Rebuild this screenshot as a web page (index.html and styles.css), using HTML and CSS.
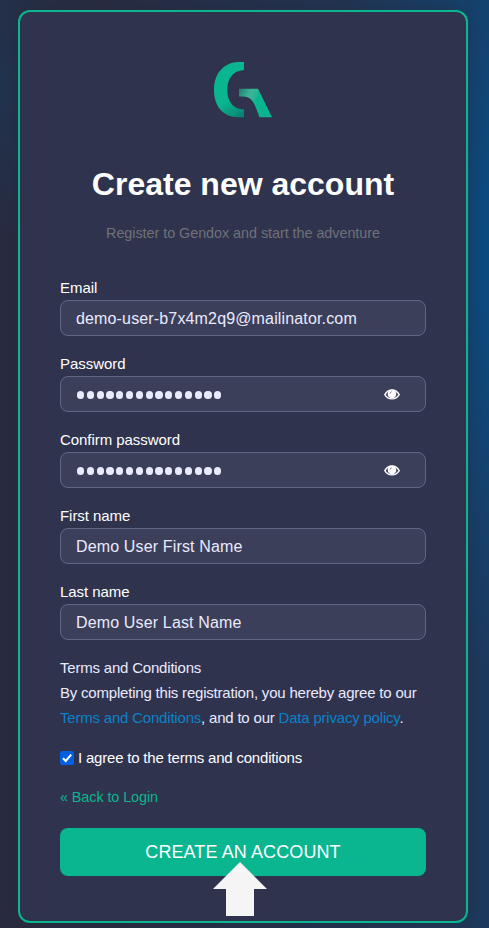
FILE: index.html
```html
<!DOCTYPE html>
<html lang="en">
<head>
<meta charset="utf-8">
<title>Create new account</title>
<link rel="stylesheet" href="styles.css">
</head>
<body>
<main class="card">
  <svg class="logo" width="58" height="56" viewBox="0 0 58 56" aria-hidden="true">
    <defs>
      <linearGradient id="bowl" gradientUnits="userSpaceOnUse" x1="15" y1="34" x2="31" y2="56">
        <stop offset="0.1" stop-color="#09b68f"/><stop offset="1" stop-color="#087a6c"/>
      </linearGradient>
      <linearGradient id="leg" gradientUnits="userSpaceOnUse" x1="24" y1="28" x2="45" y2="39">
        <stop offset="0" stop-color="#21776f"/><stop offset="0.5" stop-color="#3cb499"/><stop offset="0.72" stop-color="#2eb596"/><stop offset="0.9" stop-color="#09b68f"/>
      </linearGradient>
    </defs>
    <path fill="url(#bowl)" d="M30 0H24C9 1 0 12 0 28S9 55 24 55.3H30V47.5C19 47 13.300 40 13.300 28S19 9 30 8Z"/>
    <path fill="url(#leg)" d="M25 26.700H44L58 55.300H45.500C41 43 39 34.500 29 34.500H25Z"/>
  </svg>
  <h1 class="title">Create new account</h1>
  <p class="subtitle">Register to Gendox and start the adventure</p>
  <form class="form">
    <div class="field">
      <label class="label" for="email">Email</label>
      <div class="control"><input class="input" id="email" type="text" value="demo-user-b7x4m2q9@mailinator.com"></div>
    </div>
    <div class="field">
      <label class="label" for="password">Password</label>
      <div class="control">
        <span class="input secret" id="password"><i></i><i></i><i></i><i></i><i></i><i></i><i></i><i></i><i></i><i></i><i></i><i></i><i></i><i></i><i></i></span>
        <svg class="eye" width="16" height="12" viewBox="0 0 16 12"><path fill="none" stroke="#fff" stroke-width="1.400" d="M.8 5.600C4.300 -.6 11.700 -.6 15.200 5.600C11.700 11.300 4.300 11.300 .8 5.600Z"/><circle cx="8" cy="5" r="4.300" fill="#fff"/><path d="M6 4.500Q6.200 3 7.800 2.700" fill="none" stroke="#3c3f5a" stroke-width=".6"/></svg>
      </div>
    </div>
    <div class="field">
      <label class="label" for="confirm">Confirm password</label>
      <div class="control">
        <span class="input secret" id="confirm"><i></i><i></i><i></i><i></i><i></i><i></i><i></i><i></i><i></i><i></i><i></i><i></i><i></i><i></i><i></i></span>
        <svg class="eye" width="16" height="12" viewBox="0 0 16 12"><path fill="none" stroke="#fff" stroke-width="1.400" d="M.8 5.600C4.300 -.6 11.700 -.6 15.200 5.600C11.700 11.300 4.300 11.300 .8 5.600Z"/><circle cx="8" cy="5" r="4.300" fill="#fff"/><path d="M6 4.500Q6.200 3 7.800 2.700" fill="none" stroke="#3c3f5a" stroke-width=".6"/></svg>
      </div>
    </div>
    <div class="field">
      <label class="label" for="first">First name</label>
      <div class="control"><input class="input" id="first" type="text" value="Demo User First Name"></div>
    </div>
    <div class="field">
      <label class="label" for="last">Last name</label>
      <div class="control"><input class="input" id="last" type="text" value="Demo User Last Name"></div>
    </div>
    <div class="terms">Terms and Conditions<br>By completing this registration, you hereby agree to our<br><a class="link">Terms and Conditions</a>, and to our <a class="link">Data privacy policy</a>.</div>
    <label class="agree">
      <svg class="check" width="14" height="14" viewBox="0 0 14 14"><rect width="14" height="14" rx="2" fill="#0060df"/><path d="M3 7.300L5.700 10L11.200 3.600" fill="none" stroke="#fff" stroke-width="2"/></svg>
      <span>I agree to the terms and conditions</span>
    </label>
    <a class="back">« Back to Login</a>
    <div class="action">
      <button class="submit" type="button">CREATE AN ACCOUNT</button>
      <svg class="pointer" width="54" height="54" viewBox="0 0 54 54"><path fill="#f5f5f5" d="M27 0L54 27H41V54H13V27H0Z"/></svg>
    </div>
  </form>
</main>
</body>
</html>
```

FILE: styles.css
```css
* { box-sizing: border-box; }
body {
  margin: 0;
  height: 928px;
  overflow: hidden;
  padding: 10px 21px 0 18px;
  font-family: "Liberation Sans", Arial, sans-serif;
  color: #fff;
  background:
    radial-gradient(ellipse 200px 420px at 510px 250px, rgba(0, 86, 150, 0.75), rgba(0, 86, 150, 0)),
    linear-gradient(90deg, rgba(28, 60, 98, 0) 15%, rgba(28, 60, 98, 0.9) 100%),
    radial-gradient(ellipse 120px 170px at 0 85px, rgba(30, 56, 86, 0.7), rgba(30, 56, 86, 0)),
    #292b41;
}
.card {
  height: 913px;
  padding: 50px 40px 0;
  border: 2px solid #09b68f;
  border-radius: 12px;
  background: #30334e;
  box-shadow: 0 0 20px rgba(38, 38, 50, 0.5);
}
.logo { display: block; margin: 0 auto; }
.title {
  margin: 46px 0 0;
  text-align: center;
  font-size: 32px;
  line-height: 40px;
}
.subtitle {
  margin: 19px 0 0;
  text-align: center;
  color: #6e7178;
  font-size: 14.400px;
  letter-spacing: -0.05px;
  line-height: 20px;
}
.form { margin-top: 35px; }
.field { height: 76px; }
.label { display: block; height: 22px; font-size: 15px; line-height: 20px; letter-spacing: -0.05px; }
.control { position: relative; }
.input {
  display: block;
  width: 100%;
  height: 36px;
  padding: 2px 15px 0;
  border: 1px solid #636683;
  border-radius: 8px;
  background: #3c3f5a;
  color: #eaeaff;
  font: 16px/32px "Liberation Sans", Arial, sans-serif;
  letter-spacing: 0.15px;
}
.secret { display: flex; align-items: center; gap: 2.500px; padding-left: 16px; }
.secret i { width: 7.300px; height: 7.300px; border-radius: 50%; background: #eaeaff; }
.eye { position: absolute; right: 26px; top: 13px; }
.terms {
  height: 75px;
  margin-top: -3px;
  color: #eaeaff;
  font-size: 15px;
  letter-spacing: -0.2px;
  line-height: 25px;
  white-space: nowrap;
}
.link { color: #0a82c8; }
.agree { display: flex; align-items: center; gap: 4px; height: 20px; margin-top: 18px; font-size: 15px; letter-spacing: -0.2px; }
.agree span { margin-top: -1px; }
.back { display: block; margin-top: 19px; color: #09b68f; font-size: 14.400px; letter-spacing: -0.08px; line-height: 20px; }
.action { position: relative; margin-top: 21px; }
.submit {
  display: block;
  width: 100%;
  height: 48px;
  padding: 0;
  border: 0;
  border-radius: 8px;
  background: #09b68f;
  color: #fff;
  font: 18px "Liberation Sans", Arial, sans-serif;
  letter-spacing: 0.1px;
}
.pointer { position: absolute; left: 153px; top: 34px; }
```
